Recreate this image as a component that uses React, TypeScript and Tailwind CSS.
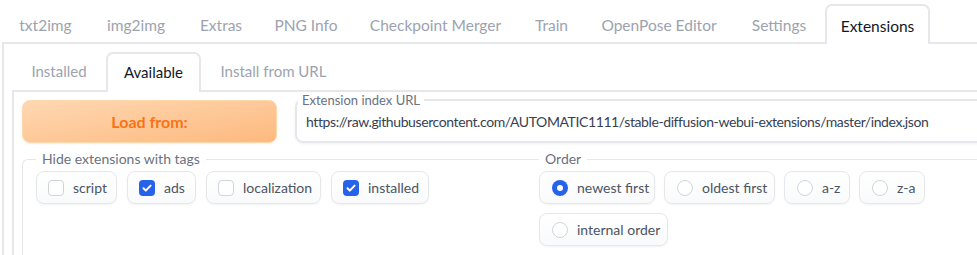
import React from "react";

const topTabs: { label: string; w: string; active?: boolean }[] = [
  { label: "txt2img", w: "w-[87px]" },
  { label: "img2img", w: "w-[94px]" },
  { label: "Extras", w: "w-[76px]" },
  { label: "PNG Info", w: "w-[94px]" },
  { label: "Checkpoint Merger", w: "w-[165px]" },
  { label: "Train", w: "w-[67px]" },
  { label: "OpenPose Editor", w: "w-[148px]" },
  { label: "Settings", w: "w-[92px]" },
  { label: "Extensions", w: "w-[105px]", active: true },
];

const subTabs: { label: string; w: string; active?: boolean }[] = [
  { label: "Installed", w: "w-[94px]" },
  { label: "Available", w: "w-[95px]", active: true },
  { label: "Install from URL", w: "w-[145px]" },
];

function Tab({ label, w, active, top }: { label: string; w: string; active?: boolean; top?: boolean }) {
  return (
    <div
      className={
        "h-[40px] -mb-[2px] flex items-center justify-center shrink-0 " +
        (top ? "pt-[3px] " : "pb-[1px] ") +
        w +
        (active
          ? " bg-white border-2 border-b-0 border-[#e5e7eb] rounded-t-[7px] text-[#111827]"
          : " text-[#9ca3af] border-2 border-transparent")
      }
    >
      {label}
    </div>
  );
}

function Check() {
  return (
    <svg width="16" height="16" viewBox="0 0 16 16" className="block">
      <path d="M4.5 8.3l2.3 2.3L11.6 5.6" fill="none" stroke="white" strokeWidth="2" strokeLinecap="round" strokeLinejoin="round" />
    </svg>
  );
}

function CheckItem({ label, checked, w }: { label: string; checked?: boolean; w: string }) {
  return (
    <div
      className={
        "h-[33px] flex items-center pl-[11px] gap-[9px] rounded-[8px] border border-[#e5e7eb] bg-gradient-to-b from-white to-[#f9fafb] shadow-[0_1px_2px_rgba(0,0,0,0.05)] " +
        w
      }
    >
      {checked ? (
        <div className="w-[16px] h-[16px] rounded-[4px] bg-[#2563eb] flex items-center justify-center">
          <Check />
        </div>
      ) : (
        <div className="w-[16px] h-[16px] rounded-[4px] border border-[#d1d5db] bg-white" />
      )}
      <span className="text-[#4b5563]">{label}</span>
    </div>
  );
}

function RadioItem({ label, checked, w }: { label: string; checked?: boolean; w: string }) {
  return (
    <div
      className={
        "h-[33px] flex items-center pl-[12px] gap-[9px] rounded-[8px] border border-[#e5e7eb] bg-gradient-to-b from-white to-[#f9fafb] shadow-[0_1px_2px_rgba(0,0,0,0.05)] " +
        w
      }
    >
      {checked ? (
        <div className="w-[16px] h-[16px] rounded-full bg-[#2563eb] flex items-center justify-center">
          <div className="w-[6px] h-[6px] rounded-full bg-white" />
        </div>
      ) : (
        <div className="w-[16px] h-[16px] rounded-full border border-[#d1d5db] bg-white" />
      )}
      <span className="text-[#4b5563]">{label}</span>
    </div>
  );
}

export default function App() {
  return (
    <div className="w-[977px] h-[255px] overflow-hidden bg-white font-['Lato',sans-serif] text-[15.5px]">
      <div className="w-[1010px]">
        {/* top tabs */}
        <div className="ml-[2px] pt-[4px] flex items-end border-b-2 border-[#e5e7eb]">
          {topTabs.map((t) => (
            <Tab key={t.label} {...t} top />
          ))}
        </div>
        {/* outer panel */}
        <div className="ml-[2px] border-l-2 border-[#e5e7eb] pl-[8px] h-[220px]">
          <div className="pt-[8px] flex items-end border-b-2 border-[#e5e7eb] text-[15px]">
            {subTabs.map((t) => (
              <Tab key={t.label} {...t} />
            ))}
          </div>
          <div className="border-l-2 border-[#e5e7eb] pl-[8px] h-[200px] flex flex-col">
            {/* load row */}
            <div className="flex items-end gap-[18px]">
              <button className="w-[255px] h-[43px] shrink-0 rounded-[8px] border border-[#fed7aa] bg-gradient-to-br from-[#fed8b2] to-[#fdb97e] text-[#f97316] font-bold text-[16px] shadow-[0_1px_2px_rgba(0,0,0,0.06)]">
                Load from:
              </button>
              <fieldset className="flex-1 border-2 border-[#e5e7eb] rounded-[8px] pl-[9px] shadow-[0_1px_3px_rgba(0,0,0,0.06)]">
                <legend className="-ml-[8px] px-[4px] text-[13px] leading-[16px] text-[#6b7280]">
                  Extension index URL
                </legend>
                <div className="h-[33px] pt-[5px] text-[#374151] text-[14px] leading-[18px] tracking-[-0.4px] whitespace-nowrap">
                  https://raw.githubusercontent.com/AUTOMATIC1111/stable-diffusion-webui-extensions/master/index.json
                </div>
              </fieldset>
            </div>
            {/* tags/order */}
            <div className="mt-[8px] flex flex-1">
              <fieldset className="w-[503px] shrink-0 border-t border-l border-[#e5e7eb] rounded-tl-[6px] pl-[13px]">
                <legend className="px-[6px] text-[14px] leading-[16px] text-[#6b7280]">
                  Hide extensions with tags
                </legend>
                <div className="mt-[4px] flex gap-[10px] text-[14px]">
                  <CheckItem label="script" w="w-[81px]" />
                  <CheckItem label="ads" checked w="w-[69px]" />
                  <CheckItem label="localization" w="w-[115px]" />
                  <CheckItem label="installed" checked w="w-[98px]" />
                </div>
              </fieldset>
              <fieldset className="flex-1 border-t border-[#e5e7eb] pl-[14px]">
                <legend className="px-[6px] text-[14px] leading-[16px] text-[#6b7280]">Order</legend>
                <div className="mt-[4px] flex flex-wrap gap-[9px] w-[400px] text-[14px]">
                  <RadioItem label="newest first" checked w="w-[116px]" />
                  <RadioItem label="oldest first" w="w-[111px]" />
                  <RadioItem label="a-z" w="w-[66px]" />
                  <RadioItem label="z-a" w="w-[66px]" />
                  <RadioItem label="internal order" w="w-[129px]" />
                </div>
              </fieldset>
            </div>
          </div>
        </div>
      </div>
    </div>
  );
}
